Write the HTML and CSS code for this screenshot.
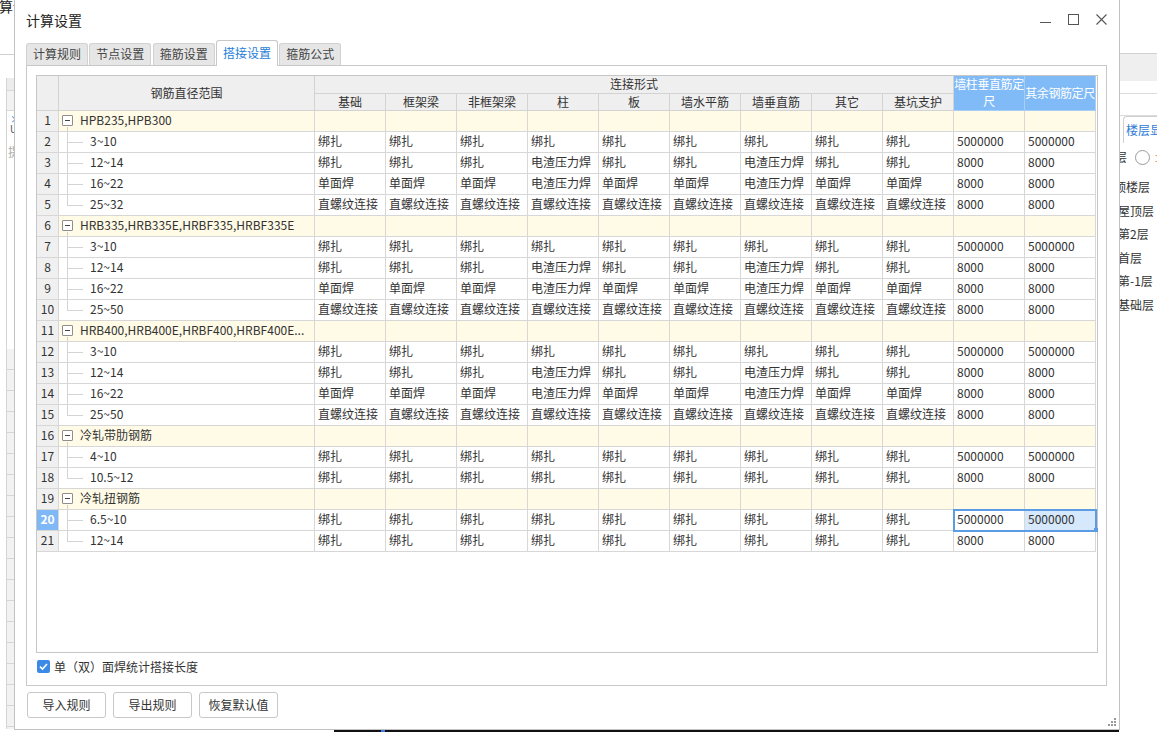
FILE: index.html
```html
<!DOCTYPE html>
<html lang="zh-CN">
<head>
<meta charset="utf-8">
<title>计算设置</title>
<link rel="stylesheet" href="styles.css">
</head>
<body>
<div class="app">
  <div class="app-main">
    <div class="al">
      <div class="al-title">算设置</div>
      <div class="al-body">
        <div class="al-panel">
          <div class="al-h1"></div>
          <div class="al-h2"></div>
          <div class="al-doc"><span class="al-x">×</span><span class="al-u">U</span></div>
          <div class="al-tx">提</div>
          <div class="al-gap"></div>
          <div class="al-rows"></div>
        </div>
      </div>
    </div>
    <div class="am"></div>
    <div class="ar">
      <div class="ar-top"></div>
      <div class="ar-band"></div>
      <div class="ar-l1"></div>
      <div class="ar-l2"></div>
      <div class="ar-tab">楼层显示</div>
      <div class="ar-radio"><span class="ar-cut">层</span><span class="ar-circle"></span><span class="ar-org">±</span></div>
      <ul class="ar-list">
        <li class="first">顶楼层</li>
        <li>屋顶层</li>
        <li>第2层</li>
        <li>首层</li>
        <li>第-1层</li>
        <li>基础层</li>
      </ul>
    </div>
  </div>
  <div class="app-foot"><span class="foot-gap"></span><span class="foot-bar"><i class="foot-mark"></i></span></div>
</div>

<div class="dialog">
  <div class="titlebar">
    <div class="title">计算设置</div>
    <div class="ctrls">
      <svg width="11" height="11" viewBox="0 0 11 11"><path d="M0 8.5H11" stroke="#555" stroke-width="1"/></svg>
      <svg width="11" height="11" viewBox="0 0 11 11"><rect x="0.5" y="0.5" width="10" height="10" fill="none" stroke="#555" stroke-width="1"/></svg>
      <svg width="11" height="11" viewBox="0 0 11 11"><path d="M0.5 0.5L10.5 10.5M10.5 0.5L0.5 10.5" stroke="#555" stroke-width="1.1"/></svg>
    </div>
  </div>
  <div class="tabs">
    <div class="tab">计算规则</div>
    <div class="tab">节点设置</div>
    <div class="tab">箍筋设置</div>
    <div class="tab on">搭接设置</div>
    <div class="tab">箍筋公式</div>
  </div>
  <div class="panel">
    <div class="frame">
      <div class="head">
        <div class="h hn"></div>
        <div class="h hr">钢筋直径范围</div>
        <div class="h hl">连接形式</div>
        <div class="h hb">墙柱垂直筋定尺</div>
        <div class="h hb">其余钢筋定尺</div>
        <div class="h s">基础</div>
        <div class="h s">框架梁</div>
        <div class="h s">非框架梁</div>
        <div class="h s">柱</div>
        <div class="h s">板</div>
        <div class="h s">墙水平筋</div>
        <div class="h s">墙垂直筋</div>
        <div class="h s">其它</div>
        <div class="h s">基坑支护</div>
      </div>

      <div class="row grp"><div class="c n">1</div><div class="c rng g"><i class="box"></i>HPB235,HPB300</div><div class="c"></div><div class="c"></div><div class="c"></div><div class="c"></div><div class="c"></div><div class="c"></div><div class="c"></div><div class="c"></div><div class="c"></div><div class="c"></div><div class="c"></div></div>
      <div class="row"><div class="c n">2</div><div class="c rng k">3~10</div><div class="c">绑扎</div><div class="c">绑扎</div><div class="c">绑扎</div><div class="c">绑扎</div><div class="c">绑扎</div><div class="c">绑扎</div><div class="c">绑扎</div><div class="c">绑扎</div><div class="c">绑扎</div><div class="c">5000000</div><div class="c">5000000</div></div>
      <div class="row"><div class="c n">3</div><div class="c rng k">12~14</div><div class="c">绑扎</div><div class="c">绑扎</div><div class="c">绑扎</div><div class="c">电渣压力焊</div><div class="c">绑扎</div><div class="c">绑扎</div><div class="c">电渣压力焊</div><div class="c">绑扎</div><div class="c">绑扎</div><div class="c">8000</div><div class="c">8000</div></div>
      <div class="row"><div class="c n">4</div><div class="c rng k">16~22</div><div class="c">单面焊</div><div class="c">单面焊</div><div class="c">单面焊</div><div class="c">电渣压力焊</div><div class="c">单面焊</div><div class="c">单面焊</div><div class="c">电渣压力焊</div><div class="c">单面焊</div><div class="c">单面焊</div><div class="c">8000</div><div class="c">8000</div></div>
      <div class="row"><div class="c n">5</div><div class="c rng k last">25~32</div><div class="c">直螺纹连接</div><div class="c">直螺纹连接</div><div class="c">直螺纹连接</div><div class="c">直螺纹连接</div><div class="c">直螺纹连接</div><div class="c">直螺纹连接</div><div class="c">直螺纹连接</div><div class="c">直螺纹连接</div><div class="c">直螺纹连接</div><div class="c">8000</div><div class="c">8000</div></div>

      <div class="row grp"><div class="c n">6</div><div class="c rng g"><i class="box"></i>HRB335,HRB335E,HRBF335,HRBF335E</div><div class="c"></div><div class="c"></div><div class="c"></div><div class="c"></div><div class="c"></div><div class="c"></div><div class="c"></div><div class="c"></div><div class="c"></div><div class="c"></div><div class="c"></div></div>
      <div class="row"><div class="c n">7</div><div class="c rng k">3~10</div><div class="c">绑扎</div><div class="c">绑扎</div><div class="c">绑扎</div><div class="c">绑扎</div><div class="c">绑扎</div><div class="c">绑扎</div><div class="c">绑扎</div><div class="c">绑扎</div><div class="c">绑扎</div><div class="c">5000000</div><div class="c">5000000</div></div>
      <div class="row"><div class="c n">8</div><div class="c rng k">12~14</div><div class="c">绑扎</div><div class="c">绑扎</div><div class="c">绑扎</div><div class="c">电渣压力焊</div><div class="c">绑扎</div><div class="c">绑扎</div><div class="c">电渣压力焊</div><div class="c">绑扎</div><div class="c">绑扎</div><div class="c">8000</div><div class="c">8000</div></div>
      <div class="row"><div class="c n">9</div><div class="c rng k">16~22</div><div class="c">单面焊</div><div class="c">单面焊</div><div class="c">单面焊</div><div class="c">电渣压力焊</div><div class="c">单面焊</div><div class="c">单面焊</div><div class="c">电渣压力焊</div><div class="c">单面焊</div><div class="c">单面焊</div><div class="c">8000</div><div class="c">8000</div></div>
      <div class="row"><div class="c n">10</div><div class="c rng k last">25~50</div><div class="c">直螺纹连接</div><div class="c">直螺纹连接</div><div class="c">直螺纹连接</div><div class="c">直螺纹连接</div><div class="c">直螺纹连接</div><div class="c">直螺纹连接</div><div class="c">直螺纹连接</div><div class="c">直螺纹连接</div><div class="c">直螺纹连接</div><div class="c">8000</div><div class="c">8000</div></div>

      <div class="row grp"><div class="c n">11</div><div class="c rng g"><i class="box"></i>HRB400,HRB400E,HRBF400,HRBF400E...</div><div class="c"></div><div class="c"></div><div class="c"></div><div class="c"></div><div class="c"></div><div class="c"></div><div class="c"></div><div class="c"></div><div class="c"></div><div class="c"></div><div class="c"></div></div>
      <div class="row"><div class="c n">12</div><div class="c rng k">3~10</div><div class="c">绑扎</div><div class="c">绑扎</div><div class="c">绑扎</div><div class="c">绑扎</div><div class="c">绑扎</div><div class="c">绑扎</div><div class="c">绑扎</div><div class="c">绑扎</div><div class="c">绑扎</div><div class="c">5000000</div><div class="c">5000000</div></div>
      <div class="row"><div class="c n">13</div><div class="c rng k">12~14</div><div class="c">绑扎</div><div class="c">绑扎</div><div class="c">绑扎</div><div class="c">电渣压力焊</div><div class="c">绑扎</div><div class="c">绑扎</div><div class="c">电渣压力焊</div><div class="c">绑扎</div><div class="c">绑扎</div><div class="c">8000</div><div class="c">8000</div></div>
      <div class="row"><div class="c n">14</div><div class="c rng k">16~22</div><div class="c">单面焊</div><div class="c">单面焊</div><div class="c">单面焊</div><div class="c">电渣压力焊</div><div class="c">单面焊</div><div class="c">单面焊</div><div class="c">电渣压力焊</div><div class="c">单面焊</div><div class="c">单面焊</div><div class="c">8000</div><div class="c">8000</div></div>
      <div class="row"><div class="c n">15</div><div class="c rng k last">25~50</div><div class="c">直螺纹连接</div><div class="c">直螺纹连接</div><div class="c">直螺纹连接</div><div class="c">直螺纹连接</div><div class="c">直螺纹连接</div><div class="c">直螺纹连接</div><div class="c">直螺纹连接</div><div class="c">直螺纹连接</div><div class="c">直螺纹连接</div><div class="c">8000</div><div class="c">8000</div></div>

      <div class="row grp"><div class="c n">16</div><div class="c rng g"><i class="box"></i>冷轧带肋钢筋</div><div class="c"></div><div class="c"></div><div class="c"></div><div class="c"></div><div class="c"></div><div class="c"></div><div class="c"></div><div class="c"></div><div class="c"></div><div class="c"></div><div class="c"></div></div>
      <div class="row"><div class="c n">17</div><div class="c rng k">4~10</div><div class="c">绑扎</div><div class="c">绑扎</div><div class="c">绑扎</div><div class="c">绑扎</div><div class="c">绑扎</div><div class="c">绑扎</div><div class="c">绑扎</div><div class="c">绑扎</div><div class="c">绑扎</div><div class="c">5000000</div><div class="c">5000000</div></div>
      <div class="row"><div class="c n">18</div><div class="c rng k last">10.5~12</div><div class="c">绑扎</div><div class="c">绑扎</div><div class="c">绑扎</div><div class="c">绑扎</div><div class="c">绑扎</div><div class="c">绑扎</div><div class="c">绑扎</div><div class="c">绑扎</div><div class="c">绑扎</div><div class="c">8000</div><div class="c">8000</div></div>

      <div class="row grp"><div class="c n">19</div><div class="c rng g"><i class="box"></i>冷轧扭钢筋</div><div class="c"></div><div class="c"></div><div class="c"></div><div class="c"></div><div class="c"></div><div class="c"></div><div class="c"></div><div class="c"></div><div class="c"></div><div class="c"></div><div class="c"></div></div>
      <div class="row"><div class="c n on">20</div><div class="c rng k">6.5~10</div><div class="c">绑扎</div><div class="c">绑扎</div><div class="c">绑扎</div><div class="c">绑扎</div><div class="c">绑扎</div><div class="c">绑扎</div><div class="c">绑扎</div><div class="c">绑扎</div><div class="c">绑扎</div><div class="sel"><div class="c">5000000</div><div class="c cur">5000000</div></div></div>
      <div class="row"><div class="c n">21</div><div class="c rng k last">12~14</div><div class="c">绑扎</div><div class="c">绑扎</div><div class="c">绑扎</div><div class="c">绑扎</div><div class="c">绑扎</div><div class="c">绑扎</div><div class="c">绑扎</div><div class="c">绑扎</div><div class="c">绑扎</div><div class="c">8000</div><div class="c">8000</div></div>
    </div>
    <label class="chk">
      <span class="cb"><svg width="13" height="13" viewBox="0 0 13 13"><path d="M3 6.6L5.5 9L10 4" fill="none" stroke="#fff" stroke-width="1.6"/></svg></span>
      <span>单（双）面焊统计搭接长度</span>
    </label>
  </div>
  <div class="btns">
    <div class="btn">导入规则</div>
    <div class="btn">导出规则</div>
    <div class="btn">恢复默认值</div>
  </div>
  <svg class="grip" width="9" height="9" viewBox="0 0 9 9">
    <rect x="6" y="0" width="2" height="2" fill="#999"/>
    <rect x="3" y="3" width="2" height="2" fill="#999"/>
    <rect x="6" y="3" width="2" height="2" fill="#999"/>
    <rect x="0" y="6" width="2" height="2" fill="#999"/>
    <rect x="3" y="6" width="2" height="2" fill="#999"/>
    <rect x="6" y="6" width="2" height="2" fill="#999"/>
  </svg>
</div>
</body>
</html>
```

FILE: styles.css
```css
* { box-sizing: border-box; }
html, body { margin: 0; padding: 0; }
body {
  width: 1157px;
  height: 732px;
  overflow: hidden;
  position: relative;
  background: #fff;
  font-family: "Noto Sans CJK SC", "Microsoft YaHei", sans-serif;
  font-size: 12px;
  color: #333;
}

/* ---------- background application ---------- */
.app { display: flex; flex-direction: column; height: 732px; }
.app-main { flex: 1; display: flex; min-height: 0; }
.al { width: 120px; flex: none; display: flex; flex-direction: column; }
.am { flex: 1; }
.ar { width: 47px; flex: none; display: flex; flex-direction: column; }

.al-title {
  height: 56px;
  border-bottom: 1px solid #cfcfcf;
  font-size: 14px;
  line-height: 14px;
  margin-left: -1px;
  margin-top: -1px;
  color: #222;
  overflow: hidden;
  white-space: nowrap;
}
.al-body { flex: 1; padding: 23px 0 0 6px; display: flex; }
.al-panel { flex: 1; border-left: 1px solid #d4d4d4; display: flex; flex-direction: column; }
.al-h1 { height: 13px; background: #ececec; border-bottom: 1px solid #d8d8d8; }
.al-h2 { height: 20px; background: #f2f2f2; border-bottom: 1px solid #d8d8d8; }
.al-doc { height: 32px; padding: 3px 0 0 3px; line-height: 10px; font-size: 10px; }
.al-x { color: #2f7fe0; display: block; }
.al-u { color: #555; display: block; }
.al-tx { height: 20px; color: #aaa; font-size: 12px; padding-left: 1px; }
.al-gap { height: 186px; }
.al-rows {
  flex: 1;
  background: #f2f2f2 repeating-linear-gradient(to bottom, transparent 0 20px, #d6d6d6 20px 21px);
}

.ar-top { height: 53px; }
.ar-band { height: 28px; border-top: 1px solid #d2d2d2; background: #efefef; }
.ar-l1 { height: 12px; }
.ar-l2 { height: 23px; border-top: 1px solid #dcdcdc; border-bottom: 1px solid #dcdcdc; }
.ar-tab {
  margin: 0 0 0 13px;
  height: 27px;
  border: 1px solid #cfcfcf;
  border-right: none;
  border-bottom: none;
  border-radius: 4px 0 0 0;
  color: #2e7ad6;
  line-height: 25px;
  padding-left: 2px;
  white-space: nowrap;
  overflow: hidden;
}
.ar-radio {
  height: 32px;
  padding-top: 4px;
  display: flex;
  align-items: flex-start;
  line-height: 20px;
  white-space: nowrap;
  overflow: hidden;
}
.ar-cut { margin-left: 5px; flex: none; }
.ar-circle {
  flex: none;
  width: 15px;
  height: 15px;
  border: 1px solid #9a9a9a;
  border-radius: 50%;
  margin: 3px 0 0 8px;
}
.ar-org { color: #d88a2c; margin-left: 4px; flex: none; }
.ar-list { list-style: none; margin: 0; padding: 0 0 0 8px; }
.ar-list li { line-height: 23.6px; white-space: nowrap; }
.ar-list li.first { margin-left: -4px; }

.app-foot { height: 3px; display: flex; flex: none; }
.foot-gap { width: 334px; flex: none; }
.foot-bar { width: 785px; flex: none; background: #111; display: flex; }
.foot-mark { width: 4px; margin-left: 47px; background: #3b7de0; }

/* ---------- dialog window ---------- */
.dialog {
  position: absolute;
  left: 14px;
  top: -1px;
  width: 1106px;
  height: 731px;
  background: #fff;
  border: 1px solid #c2c2c2;
  display: flex;
  flex-direction: column;
  z-index: 5;
}
.titlebar {
  height: 40px;
  flex: none;
  display: flex;
  justify-content: space-between;
  padding: 0 12px 0 11px;
}
.title { font-size: 14px; line-height: 20px; padding-top: 10px; color: #222; }
.ctrls { display: flex; gap: 17px; padding-top: 14px; }
.ctrls svg { display: block; }

.tabs {
  height: 25px;
  flex: none;
  display: flex;
  align-items: flex-end;
  gap: 1.3px;
  padding-left: 11px;
  position: relative;
  z-index: 1;
}
.tab {
  height: 22px;
  padding: 0 6px;
  border: 1px solid #d2d2d2;
  border-bottom: none;
  border-radius: 3px 3px 0 0;
  background: #e6e6e6;
  line-height: 19px;
  color: #444;
}
.tab.on {
  height: 26px;
  margin-bottom: -1px;
  background: #fff;
  color: #1f7ed8;
  border-color: #c8c8c8;
  line-height: 23px;
}

.panel {
  flex: none;
  margin-left: 11px;
  width: 1081px;
  height: 621px;
  border: 1px solid #c8c8c8;
  padding: 9px 8px 0 9px;
  display: flex;
  flex-direction: column;
}
.frame {
  height: 578px;
  flex: none;
  border: 1px solid #c6c6c6;
  background: #fff;
}

.head, .row {
  display: grid;
  grid-template-columns: 22px 256px repeat(11, 71px);
}
.head { grid-template-rows: 18px 17px; }
.h {
  background: #efefef;
  border-right: 1px solid #d3d3d3;
  border-bottom: 1px solid #d3d3d3;
  text-align: center;
  white-space: nowrap;
  color: #333;
}
.hn { grid-column: 1; grid-row: 1 / span 2; }
.hr {
  grid-column: 2;
  grid-row: 1 / span 2;
  display: flex;
  align-items: center;
  justify-content: center;
  padding-bottom: 2px;
}
.hl { grid-column: 3 / span 9; grid-row: 1; line-height: 16px; }
.s { line-height: 15px; }
.hb {
  grid-row: 1 / span 2;
  background: #80baf7;
  color: #fff;
  border-right-color: #a9cef6;
  border-bottom-color: #a9cef6;
  letter-spacing: -0.4px;
  white-space: normal;
  line-height: 17px;
  display: flex;
  align-items: center;
  justify-content: center;
  padding-bottom: 2px;
  overflow: hidden;
}

.c {
  height: 21px;
  line-height: 18px;
  border-right: 1px solid #d7d7d7;
  border-bottom: 1px solid #d7d7d7;
  padding-left: 3px;
  white-space: nowrap;
  overflow: hidden;
  color: #333;
}
.grp .c { background: #fffbe6; }
.c.n { background: #f0f0f0; text-align: center; padding: 0; }
.grp .c.n { background: #f0f0f0; }
.c.n.on { background: #7fb8f7; color: #fff; font-weight: bold; }

.rng { text-overflow: ellipsis; }
.rng.g {
  background-image: linear-gradient(#cfcfcf, #cfcfcf);
  background-position: 8px 16px;
  background-size: 1px 5px;
  background-repeat: no-repeat;
}
.box {
  display: inline-block;
  width: 11px;
  height: 11px;
  border: 1px solid #8e8e8e;
  border-radius: 1px;
  vertical-align: -1px;
  margin-right: 7px;
  background: #fff linear-gradient(#444, #444) center / 5px 1px no-repeat;
}
.rng.k {
  padding-left: 31px;
  background-image: linear-gradient(#d4d4d4, #d4d4d4), linear-gradient(#d4d4d4, #d4d4d4);
  background-position: 8px 0, 8px 10px;
  background-size: 1px 100%, 16px 1px;
  background-repeat: no-repeat;
}
.rng.k.last { background-size: 1px 11px, 16px 1px; }

.sel {
  grid-column: span 2;
  display: grid;
  grid-template-columns: 71px 71px;
  outline: 2px solid #5c9ce5;
  outline-offset: -1px;
  position: relative;
  z-index: 1;
}
.sel .cur { background: #d5e8fc; }
.sel::after {
  content: "";
  position: absolute;
  right: -2px;
  bottom: -1px;
  width: 4px;
  height: 4px;
  background: #5c9ce5;
}

.chk {
  margin-top: 7px;
  height: 13px;
  display: flex;
  align-items: center;
  gap: 4px;
  padding-left: 1px;
  color: #333;
  line-height: 13px;
}
.cb {
  width: 13px;
  height: 13px;
  border-radius: 2px;
  background: #3b8ae6;
  display: block;
  flex: none;
}
.cb svg { display: block; }

.btns {
  flex: none;
  display: flex;
  gap: 7px;
  margin-top: 6px;
  padding-left: 12px;
}
.btn {
  width: 79px;
  height: 26px;
  border: 1px solid #c8c8c8;
  border-radius: 3px;
  background: #fff;
  text-align: center;
  line-height: 24px;
  color: #333;
}
.grip { position: absolute; right: 2px; bottom: 2px; display: block; }
```
